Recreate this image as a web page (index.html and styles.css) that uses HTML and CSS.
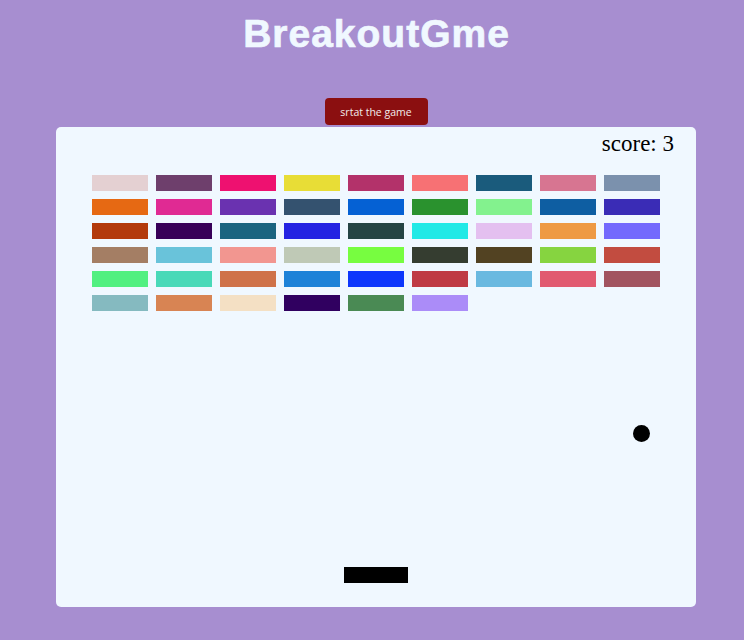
FILE: index.html
```html
<!DOCTYPE html>
<html lang="en">
<head>
<meta charset="utf-8">
<title>BreakoutGme</title>
<link rel="stylesheet" href="styles.css">
</head>
<body>
<main class="page">
  <h1 class="title">BreakoutGme</h1>
  <button class="start-btn" type="button">srtat the game</button>
  <section class="board">
    <div class="score">score: 3</div>
    <div class="bricks">
      <span class="brick" style="background:#e4d0d2"></span>
      <span class="brick" style="background:#6e3f6c"></span>
      <span class="brick" style="background:#ee1170"></span>
      <span class="brick" style="background:#e8dd36"></span>
      <span class="brick" style="background:#b3326a"></span>
      <span class="brick" style="background:#f77174"></span>
      <span class="brick" style="background:#1a5b7c"></span>
      <span class="brick" style="background:#d77591"></span>
      <span class="brick" style="background:#7b91ad"></span>

      <span class="brick" style="background:#e66913"></span>
      <span class="brick" style="background:#e02a93"></span>
      <span class="brick" style="background:#6a32b0"></span>
      <span class="brick" style="background:#34526f"></span>
      <span class="brick" style="background:#0561d4"></span>
      <span class="brick" style="background:#2a922e"></span>
      <span class="brick" style="background:#83f28e"></span>
      <span class="brick" style="background:#0e5ea2"></span>
      <span class="brick" style="background:#3a2cb6"></span>

      <span class="brick" style="background:#b33a0c"></span>
      <span class="brick" style="background:#380058"></span>
      <span class="brick" style="background:#1a6480"></span>
      <span class="brick" style="background:#2423e2"></span>
      <span class="brick" style="background:#254444"></span>
      <span class="brick" style="background:#21e9e6"></span>
      <span class="brick" style="background:#e4c0f0"></span>
      <span class="brick" style="background:#ee9a44"></span>
      <span class="brick" style="background:#7369fd"></span>

      <span class="brick" style="background:#a47e64"></span>
      <span class="brick" style="background:#69c3da"></span>
      <span class="brick" style="background:#f29690"></span>
      <span class="brick" style="background:#bfc9b6"></span>
      <span class="brick" style="background:#77fd40"></span>
      <span class="brick" style="background:#353d30"></span>
      <span class="brick" style="background:#524222"></span>
      <span class="brick" style="background:#86d440"></span>
      <span class="brick" style="background:#c24c40"></span>

      <span class="brick" style="background:#51f080"></span>
      <span class="brick" style="background:#49d9b8"></span>
      <span class="brick" style="background:#cf7249"></span>
      <span class="brick" style="background:#1d82d8"></span>
      <span class="brick" style="background:#0d37fc"></span>
      <span class="brick" style="background:#bf3a44"></span>
      <span class="brick" style="background:#6ab9e0"></span>
      <span class="brick" style="background:#e15a70"></span>
      <span class="brick" style="background:#a25460"></span>

      <span class="brick" style="background:#85bac0"></span>
      <span class="brick" style="background:#d88453"></span>
      <span class="brick" style="background:#f4e0c4"></span>
      <span class="brick" style="background:#300060"></span>
      <span class="brick" style="background:#4a8a54"></span>
      <span class="brick" style="background:#ab8cf8"></span>
    </div>
    <div class="ball"></div>
    <div class="paddle"></div>
  </section>
</main>
</body>
</html>
```

FILE: styles.css
```css
html, body {
  margin: 0;
  padding: 0;
  background: #a78ed0;
}

.page {
  display: flex;
  flex-direction: column;
  align-items: center;
  padding-left: 8px;
}

.title {
  margin: 12px 0 0;
  padding-left: 1px;
  font-family: "Liberation Sans", Arial, sans-serif;
  font-weight: bold;
  font-size: 39px;
  line-height: 44px;
  letter-spacing: 1px;
  -webkit-text-stroke: 0.7px #f0f8ff;
  color: #f0f8ff;
}

.start-btn {
  margin-top: 42px;
  width: 103px;
  height: 27px;
  border: none;
  border-radius: 4px;
  background: #8b0f10;
  color: #f2ecec;
  font-family: "Open Sans", sans-serif;
  font-size: 10.5px;
  padding: 0;
  cursor: pointer;
}

.board {
  position: relative;
  margin-top: 2px;
  width: 640px;
  height: 480px;
  box-sizing: border-box;
  background: #f0f8ff;
  border-radius: 5px;
  padding: 48px 36px 0;
}

.score {
  position: absolute;
  top: 2px;
  right: 22px;
  font-family: "Liberation Serif", "Times New Roman", serif;
  font-size: 23px;
  line-height: 30px;
  color: #000;
}

.bricks {
  display: grid;
  grid-template-columns: repeat(9, 56px);
  grid-auto-rows: 16px;
  column-gap: 8px;
  row-gap: 8px;
}

.brick {
  display: block;
}

.ball {
  position: absolute;
  left: 577px;
  top: 298px;
  width: 17px;
  height: 17px;
  border-radius: 50%;
  background: #000;
}

.paddle {
  position: absolute;
  left: 288px;
  top: 440px;
  width: 64px;
  height: 16px;
  background: #000;
}
```
